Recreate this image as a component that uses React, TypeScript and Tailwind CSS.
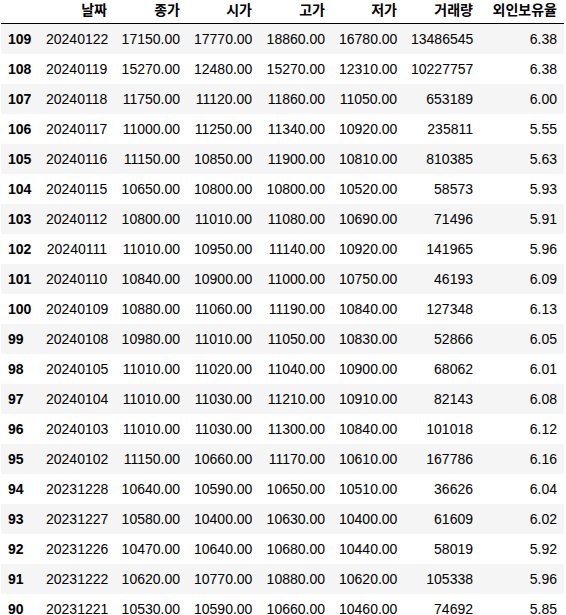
import React from "react";

const rows: string[][] = [
  ["109", "20240122", "17150.00", "17770.00", "18860.00", "16780.00", "13486545", "6.38"],
  ["108", "20240119", "15270.00", "12480.00", "15270.00", "12310.00", "10227757", "6.38"],
  ["107", "20240118", "11750.00", "11120.00", "11860.00", "11050.00", "653189", "6.00"],
  ["106", "20240117", "11000.00", "11250.00", "11340.00", "10920.00", "235811", "5.55"],
  ["105", "20240116", "11150.00", "10850.00", "11900.00", "10810.00", "810385", "5.63"],
  ["104", "20240115", "10650.00", "10800.00", "10800.00", "10520.00", "58573", "5.93"],
  ["103", "20240112", "10800.00", "11010.00", "11080.00", "10690.00", "71496", "5.91"],
  ["102", "20240111", "11010.00", "10950.00", "11140.00", "10920.00", "141965", "5.96"],
  ["101", "20240110", "10840.00", "10900.00", "11000.00", "10750.00", "46193", "6.09"],
  ["100", "20240109", "10880.00", "11060.00", "11190.00", "10840.00", "127348", "6.13"],
  ["99", "20240108", "10980.00", "11010.00", "11050.00", "10830.00", "52866", "6.05"],
  ["98", "20240105", "11010.00", "11020.00", "11040.00", "10900.00", "68062", "6.01"],
  ["97", "20240104", "11010.00", "11030.00", "11210.00", "10910.00", "82143", "6.08"],
  ["96", "20240103", "11010.00", "11030.00", "11300.00", "10840.00", "101018", "6.12"],
  ["95", "20240102", "11150.00", "10660.00", "11170.00", "10610.00", "167786", "6.16"],
  ["94", "20231228", "10640.00", "10590.00", "10650.00", "10510.00", "36626", "6.04"],
  ["93", "20231227", "10580.00", "10400.00", "10630.00", "10400.00", "61609", "6.02"],
  ["92", "20231226", "10470.00", "10640.00", "10680.00", "10440.00", "58019", "5.92"],
  ["91", "20231222", "10620.00", "10770.00", "10880.00", "10620.00", "105338", "5.96"],
  ["90", "20231221", "10530.00", "10590.00", "10660.00", "10460.00", "74692", "5.85"],
];

const headers = ["날짜", "종가", "시가", "고가", "저가", "거래량", "외인보유율"];

export default function App() {
  return (
    <div className="w-[566px] h-[615px] overflow-hidden bg-white">
      <table
        className="ml-px table-fixed border-collapse text-black text-[14px] leading-4"
        style={{ width: 563, fontFamily: '"Liberation Sans", Arial, "Noto Sans CJK KR", sans-serif' }}
      >
        <colgroup>
          <col className="w-[38px]" />
          <col className="w-[75px]" />
          <col className="w-[73px]" />
          <col className="w-[72px]" />
          <col className="w-[73px]" />
          <col className="w-[72px]" />
          <col className="w-[76px]" />
          <col className="w-[84px]" />
        </colgroup>
        <thead>
          <tr className="border-b border-black">
            <th className="px-[7px] pt-px pb-[6px]"></th>
            {headers.map((h) => (
              <th
                key={h}
                className="px-[7px] pt-px pb-[6px] text-right font-bold whitespace-nowrap"
                style={{ fontFamily: '"Noto Sans CJK KR", "Liberation Sans", sans-serif' }}
              >
                {h}
              </th>
            ))}
          </tr>
        </thead>
        <tbody>
          {rows.map((r, i) => (
            <tr key={r[0]} className={i % 2 === 0 ? "bg-[#f5f5f5]" : "bg-white"}>
              <th className="p-[7px] text-left font-bold">{r[0]}</th>
              {r.slice(1).map((c, j) => (
                <td key={j} className="p-[7px] text-right whitespace-nowrap">
                  {c}
                </td>
              ))}
            </tr>
          ))}
        </tbody>
      </table>
    </div>
  );
}
